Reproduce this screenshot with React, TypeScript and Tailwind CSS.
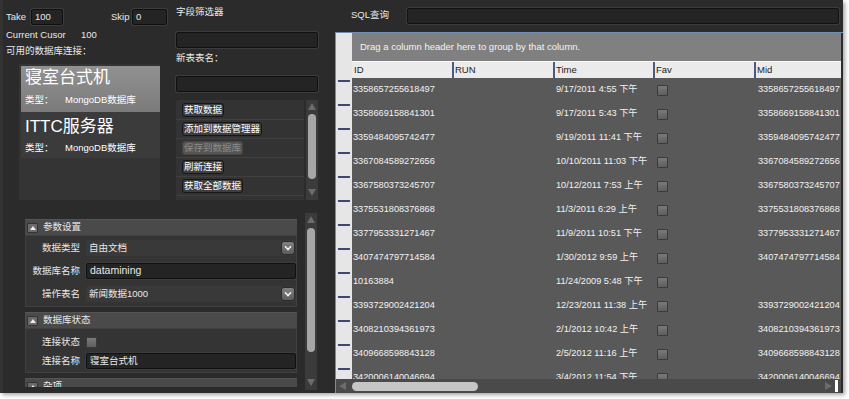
import React from "react";

const rows: [string, string, string][] = [
  ["3358657255618497", "9/17/2011 4:55 下午", "3358657255618497"],
  ["3358669158841301", "9/17/2011 5:43 下午", "3358669158841301"],
  ["3359484095742477", "9/19/2011 11:41 下午", "3359484095742477"],
  ["3367084589272656", "10/10/2011 11:03 下午", "3367084589272656"],
  ["3367580373245707", "10/12/2011 7:53 上午", "3367580373245707"],
  ["3375531808376868", "11/3/2011 6:29 上午", "3375531808376868"],
  ["3377953331271467", "11/9/2011 10:51 下午", "3377953331271467"],
  ["3407474797714584", "1/30/2012 9:59 上午", "3407474797714584"],
  ["10163884", "11/24/2009 5:48 下午", ""],
  ["3393729002421204", "12/23/2011 11:38 上午", "3393729002421204"],
  ["3408210394361973", "2/1/2012 10:42 上午", "3408210394361973"],
  ["3409668598843128", "2/5/2012 11:16 上午", "3409668598843128"],
  ["3420006140046694", "3/4/2012 11:54 下午", "3420006140046694"],
];

const actions = ["获取数据", "添加到数据管理器", "保存到数据库", "刷新连接", "获取全部数据"];

const TextBox = ({ className = "", children }: { className?: string; children?: React.ReactNode }) => (
  <div
    className={`flex h-[16px] items-center rounded-[2px] border border-[#101010] bg-[#242424] px-[3px] shadow-[0_0_0_1px_#3c3c3c] ${className}`}
  >
    {children}
  </div>
);

const Check = () => (
  <span className="block h-[11px] w-[11px] rounded-[1px] border border-[#3a3a3a] bg-gradient-to-b from-[#7a7a7a] to-[#5e5e5e]" />
);

const Arrow = ({ dir }: { dir: "up" | "down" | "left" | "right" }) => {
  const pts = {
    up: "0,7 4,0 8,7",
    down: "0,0 8,0 4,7",
    left: "7,0 7,8 0,4",
    right: "0,0 0,8 7,4",
  }[dir];
  return (
    <svg width="8" height="8" viewBox="0 0 8 8">
      <polygon points={pts} fill="#6c6c6c" />
    </svg>
  );
};

const VScroll = ({ h, thumbTop, thumbH }: { h: string; thumbTop: string; thumbH: string }) => (
  <div className={`flex w-[12px] flex-col items-center bg-[#3b3b3b] py-[3px] ${h}`}>
    <Arrow dir="up" />
    <div className={`w-[8px] rounded-full bg-[#a6a6a6] ${thumbTop} ${thumbH}`} />
    <div className="flex-1" />
    <Arrow dir="down" />
  </div>
);

const Combo = ({ children }: { children: React.ReactNode }) => (
  <div className="flex h-[16px] w-[210px] items-center justify-between rounded-[2px] bg-[#393939] pl-[3px] pr-[1px]">
    <span>{children}</span>
    <span className="flex h-[14px] w-[14px] items-center justify-center rounded-[3px] border border-[#2a2a2a] bg-gradient-to-b from-[#808080] to-[#5c5c5c]">
      <svg width="8" height="6" viewBox="0 0 8 6">
        <path d="M1 1.2 L4 4.5 L7 1.2" stroke="#f2f2f2" strokeWidth="1.6" fill="none" />
      </svg>
    </span>
  </div>
);

const GroupHeader = ({ title, className = "" }: { title: string; className?: string }) => (
  <div className={`flex h-[16px] shrink-0 items-center gap-[5px] border-t border-[#555] bg-[#4a4a4a] pl-[2px] ${className}`}>
    <span className="flex h-[10px] w-[11px] items-center justify-center rounded-[1px] border border-[#333] bg-[#6a6a6a]">
      <svg width="6" height="4" viewBox="0 0 6 4">
        <polygon points="0,4 3,0 6,4" fill="#eee" />
      </svg>
    </span>
    <span>{title}</span>
  </div>
);

const PropRow = ({ label, children }: { label: string; children: React.ReactNode }) => (
  <div className="flex h-[16px] items-center gap-[6px]">
    <span className="w-[52px] whitespace-nowrap text-right">{label}</span>
    {children}
  </div>
);

export default function App() {
  return (
    <div className="h-[399px] w-[849px] bg-white font-['Liberation_Sans','Noto_Sans_CJK_SC',sans-serif] text-[9.5px] text-[#e8e8e8]">
      <div className="flex h-[393px] w-[843px] bg-[#2b2b2b] shadow-[2px_2px_4px_rgba(0,0,0,0.35)]">
        {/* left side */}
        <div className="flex w-[335px] flex-col border-l-[3px] border-[#333]">
          <div className="flex h-[200px] pl-[3px]">
            <div className="flex w-[161px] flex-col pt-[9px]">
              <div className="flex h-[16px] items-center">
                <span className="w-[25px]">Take</span>
                <TextBox className="w-[32px]">100</TextBox>
                <span className="ml-[48px] w-[21px]">Skip</span>
                <TextBox className="w-[35px]">0</TextBox>
              </div>
              <div className="mt-[2px] flex h-[16px] items-center">
                <span className="w-[75px]">Current Cusor</span>
                <span>100</span>
              </div>
              <div className="flex h-[16px] items-center">可用的数据库连接：</div>
              <div className="ml-[13px] mt-[5px] h-[136px] w-[141px] bg-[#343434] pl-[2px] pt-[2px]">
                <div className="h-[46px] bg-gradient-to-b from-[#919191] to-[#7b7b7b] pl-[4px] text-white">
                  <div className="h-[24px] text-[17px] leading-[24px]">寝室台式机</div>
                  <div className="flex h-[20px] items-center">
                    <span className="w-[40px]">类型：</span>MongoDB数据库
                  </div>
                </div>
                <div className="h-[46px] bg-[#3b3b3b] pl-[4px] pt-[3px] text-white">
                  <div className="h-[24px] text-[17px] leading-[24px]">ITTC服务器</div>
                  <div className="flex h-[18px] items-center">
                    <span className="w-[40px]">类型：</span>MongoDB数据库
                  </div>
                </div>
              </div>
            </div>
            <div className="ml-[9px] flex w-[142px] flex-col pt-[4px]">
              <div className="flex h-[16px] items-center">字段筛选器</div>
              <TextBox className="mt-[12px]" />
              <div className="mt-[2px] flex h-[16px] items-center">新表表名：</div>
              <TextBox className="mt-[10px]" />
              <div className="mt-[8px] flex h-[100px] gap-[2px]">
                <div className="flex flex-1 flex-col bg-[#333] pt-[1px]">
                  {actions.map((a, i) => (
                    <div key={a} className="flex h-[19px] items-center border-b border-[#404040] pl-[6px]">
                      <span
                        className={`rounded-[3px] border px-[1px] leading-[12px] ${
                          i === 2
                            ? "border-[#444] bg-[#555] text-[#8c8c8c]"
                            : "border-[#161616] bg-[#3e3e3e] text-white"
                        }`}
                      >
                        {a}
                      </span>
                    </div>
                  ))}
                </div>
                <VScroll h="h-[100px]" thumbTop="mt-[3px]" thumbH="h-[65px]" />
              </div>
            </div>
          </div>

          {/* property grid */}
          <div className="mt-[12px] flex gap-[8px] pl-[22px]">
            <div className="flex h-[175px] w-[272px] flex-col overflow-hidden pt-[7px]">
              <GroupHeader title="参数设置" />
              <div className="flex flex-col gap-[7px] border border-[#404040] bg-[#343434] pb-[4px] pl-[2px] pt-[4px]">
                <PropRow label="数据类型">
                  <Combo>自由文档</Combo>
                </PropRow>
                <PropRow label="数据库名称">
                  <TextBox className="w-[210px] text-[10.5px]">datamining</TextBox>
                </PropRow>
                <PropRow label="操作表名">
                  <Combo>新闻数据1000</Combo>
                </PropRow>
              </div>
              <GroupHeader title="数据库状态" className="mt-[5px]" />
              <div className="flex flex-col gap-[3px] border border-[#404040] bg-[#343434] pb-[3px] pl-[2px] pt-[5px]">
                <PropRow label="连接状态">
                  <Check />
                </PropRow>
                <PropRow label="连接名称">
                  <TextBox className="w-[210px]">寝室台式机</TextBox>
                </PropRow>
              </div>
              <GroupHeader title="杂项" className="mt-[5px]" />
            </div>
            <div className="mt-[1px]">
              <VScroll h="h-[177px]" thumbTop="mt-[4px]" thumbH="h-[124px]" />
            </div>
          </div>
        </div>

        {/* right side */}
        <div className="flex w-[508px] flex-col">
          <div className="box-content flex h-[15px] items-center pl-[16px] pt-[8px]">
            <span className="w-[56px]">SQL查询</span>
            <TextBox className="h-[15px] w-[432px]" />
          </div>
          <div className="mt-[9px] flex h-[361px] flex-col border-l border-t border-[#6f8db5] pr-[2px]">
            <div className="flex h-[346px]">
              <div className="flex w-[16px] flex-col bg-[#e6e6e6]">
                <div className="h-[45px] shrink-0" />
                {rows.map((r) => (
                  <div key={r[0]} className="h-[24px] shrink-0 pl-[2px] pt-[2px]">
                    <div className="h-[2px] w-[12px] bg-[#3b4a75]" />
                  </div>
                ))}
              </div>
              <div className="flex flex-1 flex-col overflow-hidden">
                <div className="flex h-[28px] shrink-0 items-center bg-[#808080] pl-[8px] text-[#f4f4f4]">
                  Drag a column header here to group by that column.
                </div>
                <div className="flex h-[17px] shrink-0 border-t border-[#fafafa] bg-[#ebebeb] text-[#1c1c1c]">
                  {[
                    ["ID", "w-[100px]"],
                    ["RUN", "w-[101px]"],
                    ["Time", "w-[100px]"],
                    ["Fav", "w-[101px]"],
                    ["Mid", "flex-1"],
                  ].map(([t, w], i) => (
                    <div key={t} className={`flex items-center ${w} ${i > 0 ? "border-l-2 border-[#4a5a80] pl-[1px]" : "pl-[2px]"}`}>
                      {t}
                    </div>
                  ))}
                </div>
                <div className="flex-1 bg-[#595959] text-[9.2px]">
                  {rows.map(([id, time, mid]) => (
                    <div key={id} className="flex h-[24px] items-center text-[#f2f2f2]">
                      <span className="w-[201px] pl-[1px]">{id}</span>
                      <span className="w-[101px] whitespace-nowrap pl-[3px]">{time}</span>
                      <span className="w-[101px] pl-[3px]">
                        <Check />
                      </span>
                      <span className="pl-[3px]">{mid}</span>
                    </div>
                  ))}
                </div>
              </div>
            </div>
            <div className="flex h-[14px] items-center bg-[#4a4a4a] pl-[3px] pr-[3px]">
              <Arrow dir="left" />
              <div className="ml-[5px] h-[9px] w-[126px] rounded-full bg-[#c6c6c6]" />
              <div className="flex-1" />
              <Arrow dir="right" />
              <div className="ml-[2px] h-[12px] w-[3px] bg-white" />
            </div>
          </div>
        </div>
      </div>
    </div>
  );
}
